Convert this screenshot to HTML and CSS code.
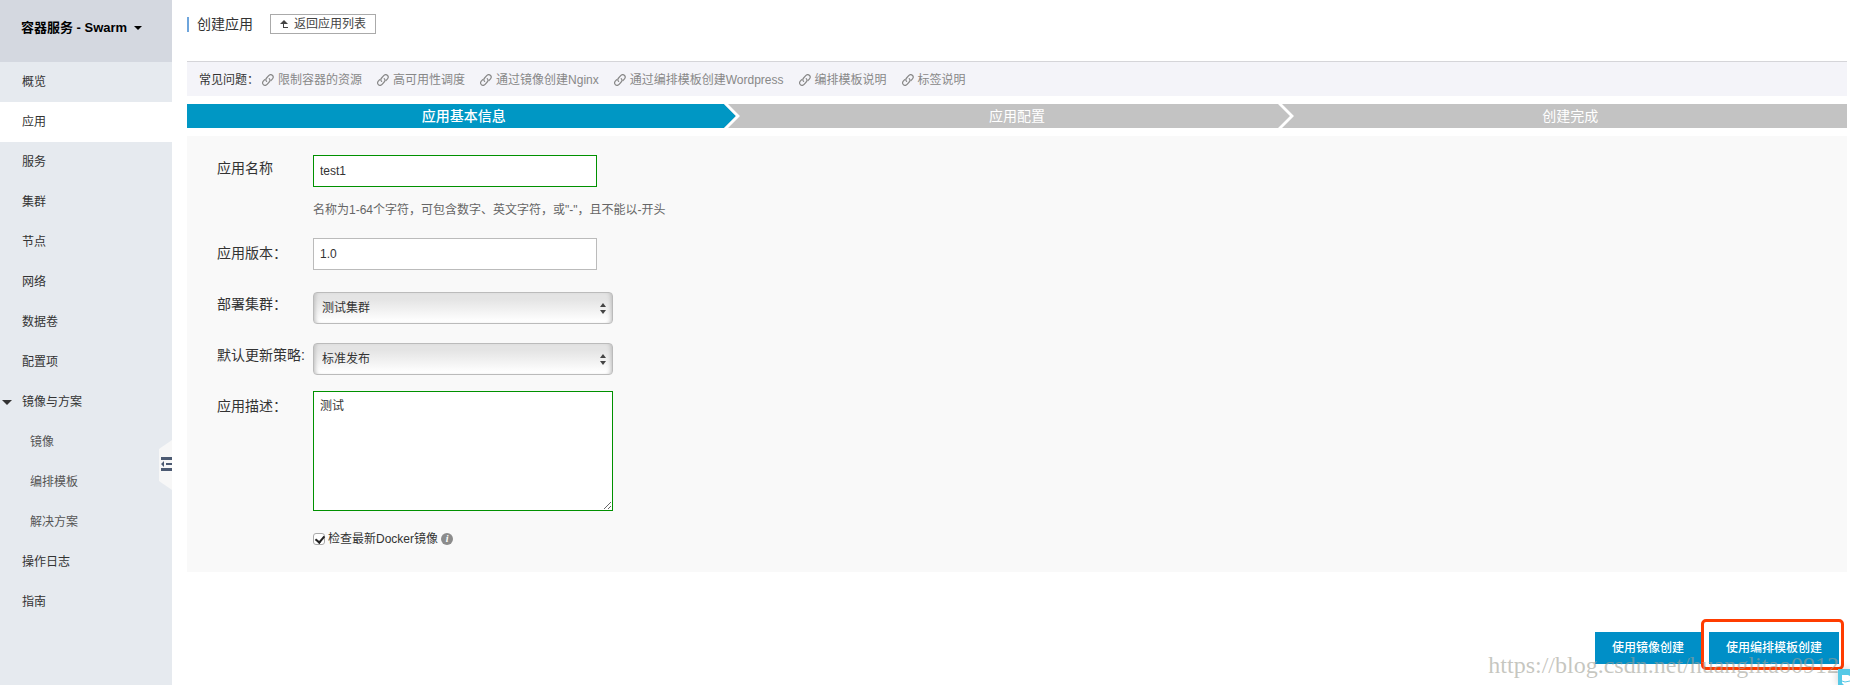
FILE: index.html
```
<!DOCTYPE html>
<html lang="zh-CN">
<head>
  <meta charset="UTF-8">
  <meta name="viewport" content="width=device-width, initial-scale=1.0">
  <title>创建应用 - 容器服务</title>
  <link rel="stylesheet" href="styles.css">
</head>
<body>
  <svg class="sprite" aria-hidden="true">
    <symbol id="link" viewBox="0 0 12 12">
      <g fill="none" stroke="currentColor" stroke-width="1.2" stroke-linecap="round">
        <path d="M4.6 7.4C3.6 6.4 3.7 5 4.6 4L6.7 1.6C7.700 .5 9.200 .4 10.300 1.300C11.400 2.300 11.400 3.800 10.500 4.800L8.900 6.600"/>
        <path d="M7.200 4.600C8.200 5.600 8.100 7 7.200 8L5.100 10.400C4.100 11.500 2.600 11.600 1.500 10.700C.4 9.700 .4 8.200 1.300 7.200L2.700 5.600"/>
      </g>
    </symbol>
  </svg>
  <div class="layout">
    <aside class="sidebar">
      <button class="product" type="button">容器服务 - Swarm <span class="caret"></span></button>
      <nav class="menu">
        <a href="#">概览</a>
        <a href="#" class="active">应用</a>
        <a href="#">服务</a>
        <a href="#">集群</a>
        <a href="#">节点</a>
        <a href="#">网络</a>
        <a href="#">数据卷</a>
        <a href="#">配置项</a>
        <a href="#" class="group"><span class="arrow"></span>镜像与方案</a>
        <a href="#" class="sub">镜像</a>
        <a href="#" class="sub">编排模板</a>
        <a href="#" class="sub">解决方案</a>
        <a href="#">操作日志</a>
        <a href="#">指南</a>
      </nav>
      <button class="collapse" type="button" aria-label="收起">
        <svg width="13" height="50" viewBox="0 0 13 50">
          <path d="M13 0L0 9V41L13 50z" fill="#f7f7f7"/>
          <path d="M2 17h11v3H2zM7 23h6v2H7zM2 28h11v3H2zM2 24l3-3v6z" fill="#4c5a72"/>
        </svg>
      </button>
    </aside>

    <main class="main">
      <header class="page-header">
        <h1>创建应用</h1>
        <a href="#" class="back">
          <svg width="8" height="8" viewBox="0 0 8 8"><path d="M4 0L8 4H0zM3 4h1v3h4v1H3z" fill="#444"/></svg>
          返回应用列表
        </a>
      </header>

      <div class="faq">
        <span>常见问题：</span>
        <a href="#"><svg width="12" height="12"><use href="#link"/></svg>限制容器的资源</a>
        <a href="#"><svg width="12" height="12"><use href="#link"/></svg>高可用性调度</a>
        <a href="#"><svg width="12" height="12"><use href="#link"/></svg>通过镜像创建Nginx</a>
        <a href="#"><svg width="12" height="12"><use href="#link"/></svg>通过编排模板创建Wordpress</a>
        <a href="#"><svg width="12" height="12"><use href="#link"/></svg>编排模板说明</a>
        <a href="#"><svg width="12" height="12"><use href="#link"/></svg>标签说明</a>
      </div>

      <ol class="steps">
        <li class="current">应用基本信息
          <svg class="chevron" width="16" height="24" viewBox="0 0 16 24"><path d="M0 0H16V24H0L12 12z" fill="#c3c3c3"/><path d="M0 0H4L16 12L4 24H0L12 12z" fill="#fff"/></svg>
        </li>
        <li>应用配置
          <svg class="chevron" width="16" height="24" viewBox="0 0 16 24"><path d="M0 0H4L16 12L4 24H0L12 12z" fill="#fff"/></svg>
        </li>
        <li>创建完成</li>
      </ol>

      <form id="appForm" class="panel">
        <div class="row">
          <label for="appName">应用名称</label>
          <div class="field">
            <input type="text" id="appName" class="valid" value="test1">
            <p class="hint">名称为1-64个字符，可包含数字、英文字符，或"-"，且不能以-开头</p>
          </div>
        </div>
        <div class="row">
          <label for="appVersion">应用版本：</label>
          <div class="field"><input type="text" id="appVersion" value="1.0"></div>
        </div>
        <div class="row">
          <label for="cluster">部署集群：</label>
          <div class="field select">
            <select id="cluster"><option>测试集群</option></select>
            <svg width="6" height="11" viewBox="0 0 6 11"><path d="M3 0L6 4H0zM3 11L6 7H0z" fill="#444"/></svg>
          </div>
        </div>
        <div class="row">
          <label for="strategy">默认更新策略:</label>
          <div class="field select">
            <select id="strategy"><option>标准发布</option></select>
            <svg width="6" height="11" viewBox="0 0 6 11"><path d="M3 0L6 4H0zM3 11L6 7H0z" fill="#444"/></svg>
          </div>
        </div>
        <div class="row">
          <label for="appDesc">应用描述：</label>
          <div class="field"><textarea id="appDesc" class="valid">测试</textarea></div>
        </div>
        <div class="check">
          <input type="checkbox" id="latest" checked>
          <label for="latest">检查最新Docker镜像</label>
          <span class="info">i</span>
        </div>
      </form>

      <div class="actions">
        <button type="submit" form="appForm">使用镜像创建</button>
        <div class="marked"><button type="submit" form="appForm">使用编排模板创建</button></div>
      </div>
    </main>
  </div>

  <div class="watermark">https://blog.csdn.net/huanglitao0912</div>
  <button class="feedback" type="button" aria-label="咨询">
    <svg width="12" height="16" viewBox="0 0 12 16"><path d="M4 6h6l2 1v9H6l-2-2z" fill="#fff"/><path d="M4 12l3 1 5-1" stroke="#56c9e6" fill="none"/></svg>
  </button>
</body>
</html>
```

FILE: styles.css
```
* { box-sizing: border-box; }
body {
  margin: 0; background: #fff; color: #333; overflow: hidden;
  font: 12px/18px "Liberation Sans", "Noto Sans CJK SC", sans-serif;
}
a { color: inherit; text-decoration: none; }
button, input, select, textarea { font: inherit; color: inherit; }
.sprite { display: none; }
.layout { display: flex; min-height: 100vh; }

/* sidebar */
.sidebar { position: relative; flex: none; width: 172px; background: #e6eaef; }
.product {
  display: flex; align-items: center; gap: 7px; width: 100%; height: 62px;
  padding: 0 0 7px 21px; border: 0; background: #d4d8e0;
  color: #000; font-size: 13px; font-weight: bold;
}
.caret { border: 4px solid transparent; border-top-color: #000; border-bottom: 0; }
.menu a { display: flex; align-items: center; height: 40px; padding-left: 22px; }
.menu .active { background: #fff; }
.menu .group { padding-left: 2px; gap: 10px; }
.menu .sub { padding-left: 30px; color: #555; }
.arrow { border: 5px solid transparent; border-top-color: #333; border-bottom: 0; }
.collapse { position: absolute; right: 0; top: 440px; padding: 0; border: 0; background: none; line-height: 0; }

/* main */
.main { flex: 1; min-width: 0; padding: 0 3px 0 15px; }
.page-header { display: flex; align-items: center; gap: 17px; height: 61px; padding-bottom: 13px; }
.page-header h1 { margin: 0; padding-left: 8px; border-left: 2px solid #6ea5dc; font-size: 14px; font-weight: normal; line-height: 15px; }
.back { display: flex; align-items: center; gap: 6px; height: 20px; padding: 0 9px; border: 1px solid #aaa; color: #444; }
.faq { display: flex; align-items: center; gap: 15px; height: 35px; padding: 1px 0 0 12px; border-top: 1px solid #d5d5d9; background: #f4f4f9; }
.faq a { display: flex; align-items: center; gap: 4px; color: #888; }
.faq span { margin-right: -12px; }
.steps { display: flex; margin: 8px 0; padding: 0; list-style: none; }
.steps li { position: relative; flex: 1; height: 24px; background: #c3c3c3; color: #fff; font-size: 14px; line-height: 24px; text-align: center; }
.steps .current { background: #0097c4; font-weight: 500; }
.chevron { position: absolute; right: 0; top: 0; }

/* form */
.panel { display: flex; flex-direction: column; gap: 19px; padding: 19px 30px 24px; background: #f9f9f9; }
.row { display: flex; }
.row label { width: 96px; padding-top: 5px; font-size: 14px; line-height: 20px; white-space: nowrap; }
.row:first-child label { padding-top: 3px; }
.row input { display: block; width: 284px; height: 32px; padding: 0 6px; border: 1px solid #bbb; background: #fff; outline: 0; }
.hint { margin: 14px 0 0; color: #666; }
.row .valid { border-color: #009100; }
/* selects hang slightly below their row */
.select { position: relative; margin: 3px 0 -3px; }
.select select {
  display: block; width: 300px; height: 32px; padding: 0 8px; appearance: none;
  border: 1px solid #bbb; border-radius: 4px;
  background: linear-gradient(#e4e4e4 20%, #fff 95%);
  box-shadow: inset 4px 0 4px -3px #bbb, inset -4px 0 4px -3px #bbb;
}
.select svg { position: absolute; right: 7px; top: 11px; }
.row textarea { display: block; width: 300px; height: 120px; padding: 5px 6px; border: 1px solid #bbb; background: #fff; outline: 0; }
.check { display: flex; align-items: center; gap: 3px; padding-left: 96px; }
.check input { appearance: none; width: 12px; height: 12px; margin: 0; border: 1px solid #aaa; border-radius: 3px; background: #fff; }
.check input:checked::before { content: ""; display: block; width: 4px; height: 7px; margin: 0 0 0 3px; border: solid #222; border-width: 0 2px 2px 0; transform: rotate(40deg); }
.info { width: 12px; height: 12px; border-radius: 50%; background: #8c8c8c; color: #fff; font: italic bold 10px/12px "Liberation Serif", serif; text-align: center; }

.actions { display: flex; justify-content: flex-end; margin-top: 47px; padding-right: 3px; }
.actions button { height: 32px; padding: 0 17px; border: 0; background: #008fc7; color: #fff; font-weight: 500; }
.actions > button { margin-top: 13px; }
.marked { padding: 10px 2px 3px 5px; border: 3px solid #ff3c00; border-radius: 5px; }

.watermark { position: absolute; right: 11px; bottom: 8px; color: rgba(160, 160, 150, .6); font: 24px/24px "Liberation Serif", serif; pointer-events: none; }
.feedback { position: absolute; right: 0; bottom: 0; width: 12px; height: 16px; padding: 0; border: 0; background: #56c9e6; box-shadow: 0 0 8px rgba(0, 0, 0, .2); line-height: 0; }
```
